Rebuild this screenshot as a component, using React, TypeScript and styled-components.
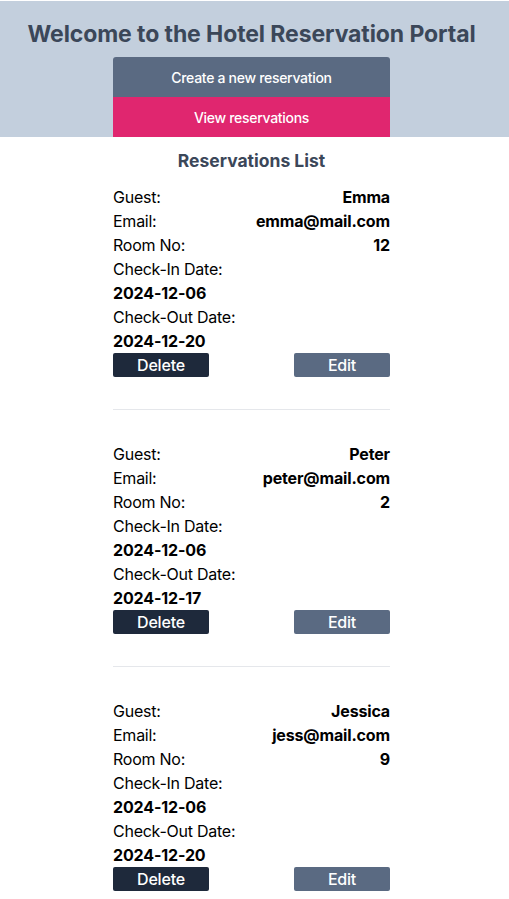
import React from "react";
import styled, { createGlobalStyle } from "styled-components";

const GlobalStyle = createGlobalStyle`
  * { box-sizing: border-box; }
  html, body { margin: 0; padding: 0; background: #ffffff; }
  body {
    font-family: Inter, "Noto Sans", "Liberation Sans", sans-serif;
    color: #000000;
    -webkit-font-smoothing: antialiased;
  }
`;

const Page = styled.div`
  padding-top: 1px;
  display: flex;
  flex-direction: column;
`;

const Header = styled.header`
  background: #c3cfdd;
  display: flex;
  flex-direction: column;
  align-items: center;
  padding: 19px 6px 0 0;
`;

const Title = styled.h1`
  margin: 0 0 9px;
  font-size: 23px;
  line-height: 28px;
  font-weight: 700;
  letter-spacing: -0.1px;
  color: #3b4759;
  white-space: nowrap;
`;

const NavButton = styled.button<{ $tone: "slate" | "pink" }>`
  width: 277px;
  height: 40px;
  border: none;
  background: ${(p) => (p.$tone === "pink" ? "#e0266f" : "#5a6a82")};
  border-radius: ${(p) => (p.$tone === "pink" ? "0" : "3px 3px 0 0")};
  color: #ffffff;
  font-family: inherit;
  font-size: 14px;
  font-weight: 500;
  letter-spacing: -0.3px;
  cursor: pointer;
`;

const Main = styled.main`
  display: flex;
  flex-direction: column;
  align-items: center;
  padding-right: 6px;
`;

const ListTitle = styled.h2`
  margin: 10px 0 11px;
  font-size: 17.5px;
  line-height: 27px;
  font-weight: 700;
  color: #3b4759;
`;

const Card = styled.section`
  width: 277px;
  display: flex;
  flex-direction: column;
`;

const Row = styled.div`
  display: flex;
  justify-content: space-between;
  font-size: 16px;
  line-height: 24px;
`;

const Label = styled.span`
  font-weight: 400;
  letter-spacing: -0.25px;
`;

const Value = styled.span`
  font-weight: 700;
  letter-spacing: -0.15px;
`;

const Actions = styled.div`
  display: flex;
  justify-content: space-between;
`;

const ActionButton = styled.button<{ $dark?: boolean }>`
  width: 96px;
  height: 24px;
  border: none;
  border-radius: 2px;
  padding: 0;
  background: ${(p) => (p.$dark ? "#1e293b" : "#5a6a82")};
  color: #ffffff;
  font-family: inherit;
  font-size: 16px;
  font-weight: 500;
  letter-spacing: -0.2px;
  line-height: 24px;
  cursor: pointer;
`;

const Divider = styled.hr`
  width: 277px;
  margin: 32px 0;
  border: none;
  border-top: 1px solid #e5e7eb;
`;

type Reservation = {
  guest: string;
  email: string;
  room: string;
  checkIn: string;
  checkOut: string;
};

const reservations: Reservation[] = [
  { guest: "Emma", email: "emma@mail.com", room: "12", checkIn: "2024-12-06", checkOut: "2024-12-20" },
  { guest: "Peter", email: "peter@mail.com", room: "2", checkIn: "2024-12-06", checkOut: "2024-12-17" },
  { guest: "Jessica", email: "jess@mail.com", room: "9", checkIn: "2024-12-06", checkOut: "2024-12-20" },
];

function ReservationCard({ r }: { r: Reservation }) {
  return (
    <Card>
      <Row>
        <Label>Guest:</Label>
        <Value>{r.guest}</Value>
      </Row>
      <Row>
        <Label>Email:</Label>
        <Value>{r.email}</Value>
      </Row>
      <Row>
        <Label>Room No:</Label>
        <Value>{r.room}</Value>
      </Row>
      <Row>
        <Label>Check-In Date:</Label>
      </Row>
      <Row>
        <Value>{r.checkIn}</Value>
      </Row>
      <Row>
        <Label>Check-Out Date:</Label>
      </Row>
      <Row>
        <Value>{r.checkOut}</Value>
      </Row>
      <Actions>
        <ActionButton $dark>Delete</ActionButton>
        <ActionButton>Edit</ActionButton>
      </Actions>
    </Card>
  );
}

export default function App() {
  return (
    <Page>
      <GlobalStyle />
      <Header>
        <Title>Welcome to the Hotel Reservation Portal</Title>
        <NavButton $tone="slate">Create a new reservation</NavButton>
        <NavButton $tone="pink">View reservations</NavButton>
      </Header>
      <Main>
        <ListTitle>Reservations List</ListTitle>
        {reservations.map((r) => (
          <React.Fragment key={r.guest}>
            <ReservationCard r={r} />
            <Divider />
          </React.Fragment>
        ))}
      </Main>
    </Page>
  );
}
